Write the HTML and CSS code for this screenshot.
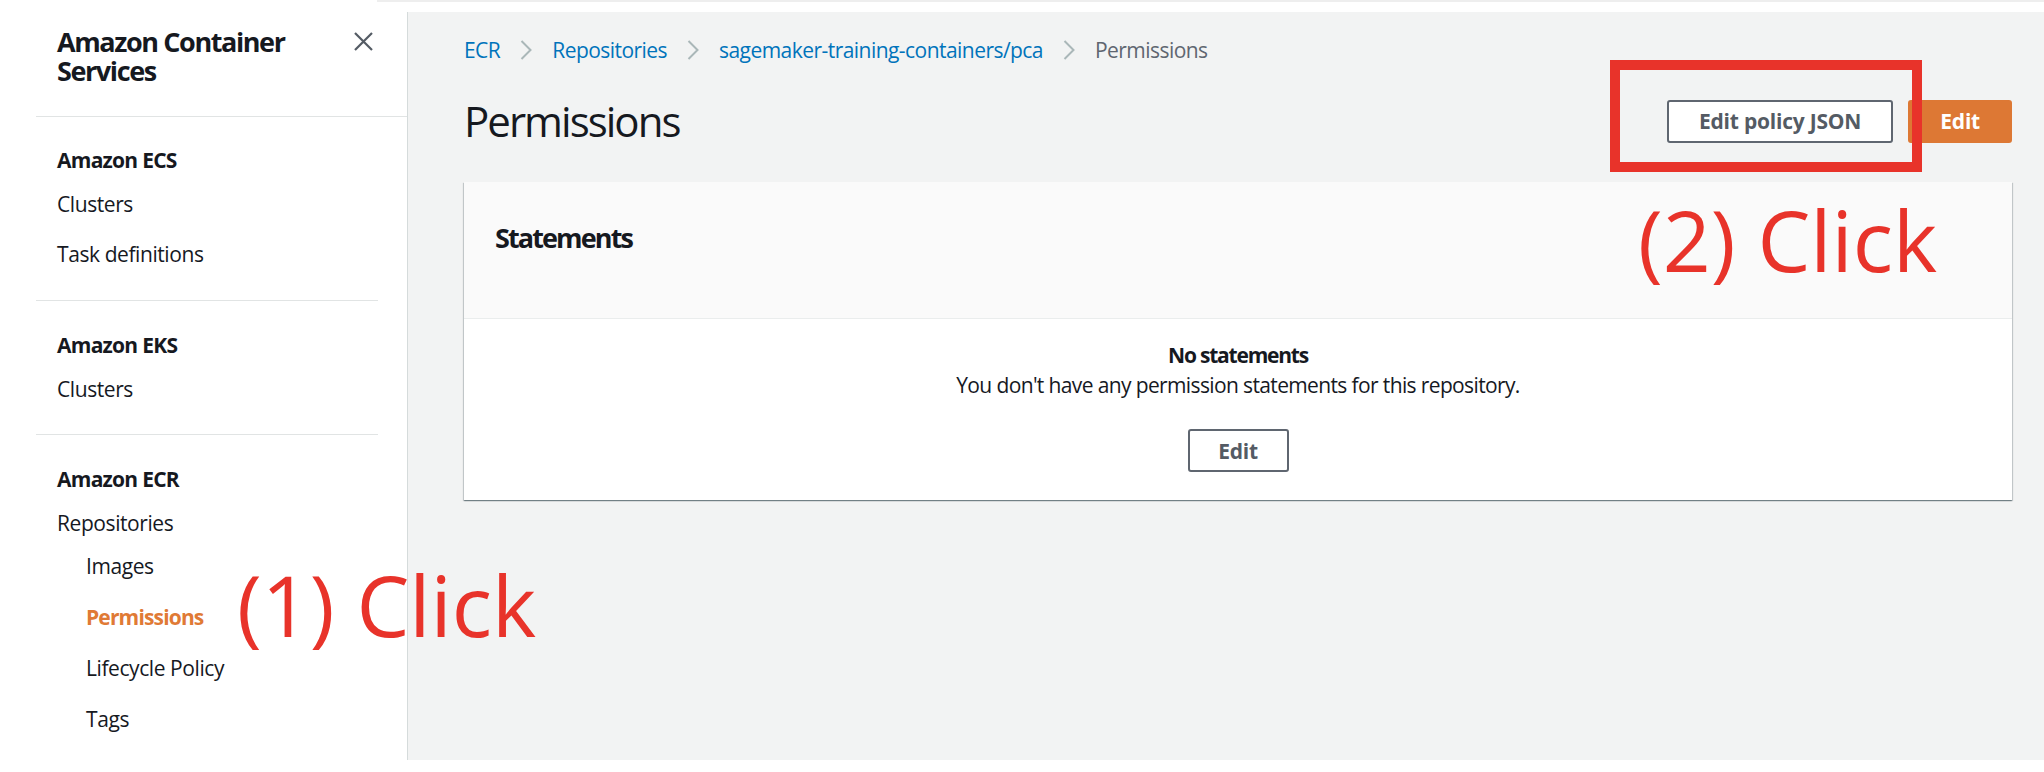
FILE: index.html
```html
<!DOCTYPE html>
<html lang="en">
<head>
<meta charset="utf-8">
<title>Permissions</title>
<link rel="stylesheet" href="styles.css">
</head>
<body>
<div class="page">
  <div class="topbar"><div class="topstrip"></div></div>
  <div class="layout">
    <nav class="sidebar">
      <div class="side-head">
        <h2 class="side-title">Amazon Container Services</h2>
        <button class="close" aria-label="Close">
          <svg width="19" height="19" viewBox="0 0 19 19"><path d="M1 1L18 18M18 1L1 18" stroke="#545b64" stroke-width="2.2" fill="none"/></svg>
        </button>
      </div>
      <div class="side-sec first">
        <h3>Amazon ECS</h3>
        <ul class="items">
          <li>Clusters</li>
          <li>Task definitions</li>
        </ul>
      </div>
      <div class="side-sec">
        <h3>Amazon EKS</h3>
        <ul class="items">
          <li>Clusters</li>
        </ul>
      </div>
      <div class="side-sec">
        <h3>Amazon ECR</h3>
        <ul class="items">
          <li>Repositories</li>
        </ul>
        <ul class="subitems">
          <li>Images</li>
          <li class="active">Permissions</li>
          <li>Lifecycle Policy</li>
          <li>Tags</li>
        </ul>
      </div>
    </nav>
    <main class="main">
      <div class="crumbs">
        <a class="crumb">ECR</a>
        <svg class="chev" width="12" height="20" viewBox="0 0 12 20"><path d="M1.5 1L10.5 10L1.5 19" stroke="#aab7b8" stroke-width="2" fill="none"/></svg>
        <a class="crumb">Repositories</a>
        <svg class="chev" width="12" height="20" viewBox="0 0 12 20"><path d="M1.5 1L10.5 10L1.5 19" stroke="#aab7b8" stroke-width="2" fill="none"/></svg>
        <a class="crumb">sagemaker-training-containers/pca</a>
        <svg class="chev" width="12" height="20" viewBox="0 0 12 20"><path d="M1.5 1L10.5 10L1.5 19" stroke="#aab7b8" stroke-width="2" fill="none"/></svg>
        <span class="crumb-current">Permissions</span>
      </div>
      <div class="head-row">
        <h1>Permissions</h1>
        <div class="actions">
          <button class="btn">Edit policy JSON</button>
          <button class="btn primary">Edit</button>
        </div>
      </div>
      <section class="card">
        <div class="card-head"><h2>Statements</h2></div>
        <div class="card-body">
          <div class="empty-title">No statements</div>
          <div class="empty-text">You don't have any permission statements for this repository.</div>
          <button class="btn">Edit</button>
        </div>
      </section>
    </main>
  </div>
  <div class="highlight"></div>
  <div class="note note-1">(1) Click</div>
  <div class="note note-2">(2) Click</div>
</div>
</body>
</html>
```
FILE: styles.css
```css
* { box-sizing: border-box; }
html, body { margin: 0; padding: 0; }
body {
  width: 2044px;
  height: 772px;
  overflow: hidden;
  background: #ffffff;
  font-family: "Open Sans", "Noto Sans", sans-serif;
  font-size: 21px;
  color: #16191f;
  letter-spacing: -0.03em;
}
.page { position: relative; width: 2044px; height: 772px; }

.topbar { height: 12px; background: #fff; }
.topstrip { margin-left: 377px; height: 2px; background: #eeeeee; }

.layout { display: flex; height: 748px; }

.sidebar {
  width: 408px;
  flex: 0 0 408px;
  background: #fff;
  border-right: 1px solid #d5dbdb;
}
.side-head {
  display: flex;
  justify-content: space-between;
  align-items: flex-start;
  margin-left: 36px;
  padding: 15px 34px 31px 21px;
  border-bottom: 1px solid #e1e4e4;
}
.side-title {
  margin: 0;
  font-size: 27px;
  line-height: 29px;
  font-weight: 700;
  width: 260px;
  letter-spacing: -0.052em;
}
.close {
  border: 0;
  background: none;
  padding: 0;
  margin-top: 5px;
  width: 19px;
  height: 19px;
  display: block;
}
.close svg { display: block; }

.side-sec {
  margin: 0 29px 0 36px;
  padding: 29px 0 20px 21px;
  border-top: 1px solid #e1e4e4;
}
.side-sec.first { border-top: 0; padding-top: 28px; padding-bottom: 21px; }
.side-sec h3 {
  margin: 0 0 4px;
  font-size: 21px;
  line-height: 30px;
  font-weight: 700;
  letter-spacing: -0.035em;
}
.items, .subitems { list-style: none; margin: 0; padding: 0; letter-spacing: -0.02em; }
.items li { line-height: 50px; }
.subitems { margin-top: -7px; padding-left: 29px; }
.subitems li { line-height: 51px; }
.subitems li.active { color: #e07a35; font-weight: 700; letter-spacing: -0.04em; }

.main {
  flex: 1;
  background: #f2f3f3;
  padding: 23px 32px 0 56px;
}
.crumbs {
  display: flex;
  align-items: center;
  gap: 20px;
  line-height: 30px;
  font-size: 21px;
  letter-spacing: -0.026em;
}
.crumb { color: #0073bb; text-decoration: none; }
.chev { display: block; flex: 0 0 auto; }
.crumb-current { color: #5f6670; }

.head-row {
  display: flex;
  justify-content: space-between;
  align-items: center;
  margin-top: 31px;
  height: 50px;
}
h1 {
  margin: 0;
  font-size: 42px;
  line-height: 50px;
  font-weight: 400;
  letter-spacing: -0.047em;
}
.actions { display: flex; gap: 15px; }

.btn {
  display: inline-flex;
  align-items: center;
  justify-content: center;
  height: 43px;
  padding: 0 30px;
  border: 2px solid #5f6670;
  border-radius: 3px;
  background: #fff;
  color: #545b64;
  font-family: inherit;
  font-size: 21px;
  font-weight: 700;
  letter-spacing: -0.01em;
}
.btn.primary {
  background: #dd7834;
  border-color: #dd7834;
  color: #fff;
}

.card {
  margin-top: 36px;
  background: #fff;
  box-shadow: 0 1px 1px 0 rgba(0, 28, 36, 0.35), 1px 1px 1px 0 rgba(0, 28, 36, 0.15), -1px 1px 1px 0 rgba(0, 28, 36, 0.15);
}
.card-head {
  height: 137px;
  padding: 38px 31px 0;
  background: #fafafa;
  border-bottom: 1px solid #eaeded;
}
.card-head h2 {
  margin: 0;
  font-size: 27px;
  line-height: 36px;
  font-weight: 700;
  letter-spacing: -0.07em;
}
.card-body {
  display: flex;
  flex-direction: column;
  align-items: center;
  padding: 21px 0 28px;
}
.empty-title { font-weight: 700; line-height: 30px; letter-spacing: -0.058em; }
.empty-text { line-height: 30px; letter-spacing: -0.03em; }
.card-body .btn { margin-top: 29px; width: 101px; }

.highlight {
  position: absolute;
  left: 1610px;
  top: 60px;
  width: 312px;
  height: 112px;
  border: 10px solid #e8332a;
}
.note {
  position: absolute;
  font-family: "Open Sans", sans-serif;
  font-size: 84px;
  line-height: 84px;
  letter-spacing: 0;
  color: #e8332a;
  white-space: nowrap;
}
.note-1 { left: 237px; top: 563px; }
.note-2 { left: 1638px; top: 198px; }
```
